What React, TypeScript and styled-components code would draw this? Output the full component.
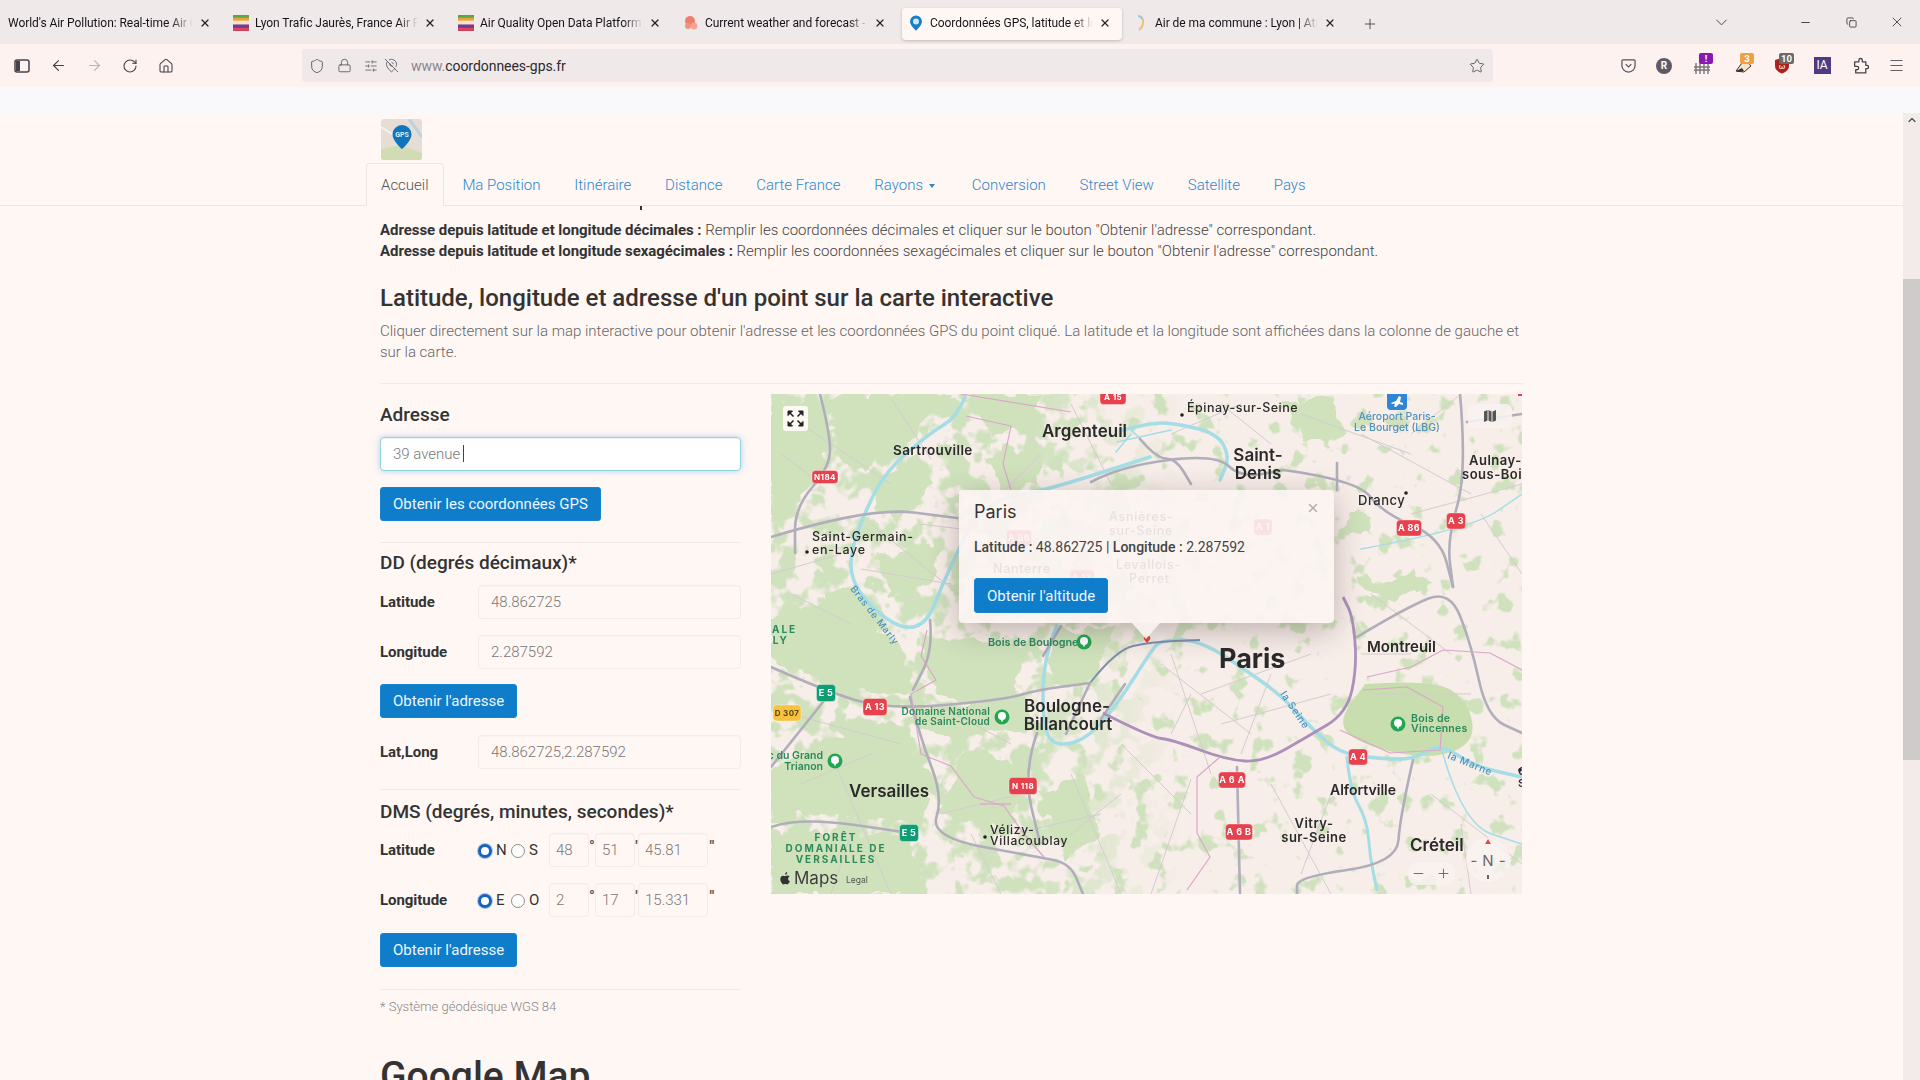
import React from "react";
import styled, { createGlobalStyle } from "styled-components";
import {
  ArrowLeft, ArrowRight, RotateCw, House, Shield, Lock, Star, Menu, Plus, ChevronDown,
  Minus, X, Copy, ChevronUp, MapPinOff, SlidersHorizontal,
} from "lucide-react";

const GlobalStyle = createGlobalStyle`
  html, body { margin: 0; padding: 0; width: 1920px; height: 1080px; overflow: hidden; background: #fff7f4; }
  * { box-sizing: border-box; }
  body { font-family: Roboto, "Liberation Sans", sans-serif; color: #333; }
`;

const Screen = styled.div`display: flex; flex-direction: column; width: 1920px; height: 1080px; overflow: hidden;`;

/* ---------- browser chrome ---------- */
const TabBar = styled.div`
  height: 44px; flex: none; display: flex; align-items: flex-start; padding: 8px 0 0 2px; gap: 5px;
  background: #f0e9ea; position: relative;
`;
const Tab = styled.div<{ $active?: boolean }>`
  width: 220px; height: 32px; flex: none; display: flex; align-items: center; gap: 6px; padding: 0 11px 2px 6px;
  border-radius: 4px; font: 400 12px Roboto, sans-serif; color: #15141a;
  background: ${(p) => (p.$active ? "#fff7f4" : "transparent")};
  box-shadow: ${(p) => (p.$active ? "0 1px 3px rgba(0,0,0,.2)" : "none")};
`;
const TabTitle = styled.span`
  flex: 1; min-width: 0; white-space: nowrap; overflow: hidden; letter-spacing: -.05px;
  -webkit-mask-image: linear-gradient(to right, #000 88%, transparent 100%);
  mask-image: linear-gradient(to right, #000 88%, transparent 100%);
`;
const TabIcon = styled.svg`width: 16px; height: 16px; flex: none;`;
const NewTab = styled.div`display: flex; align-items: center; height: 32px; margin-left: 10px; color: #4a4850;`;
const TabTools = styled.div`margin-left: auto; display: flex; align-items: center; height: 28px; color: #2d2b32;`;
const ChevronSlot = styled.div`margin-right: 51px; display: flex; color: #45434a;`;
const WinButton = styled.div`width: 46px; display: flex; justify-content: center;`;

const Toolbar = styled.div`
  height: 43px; flex: none; background: #fdf2f0; display: flex; align-items: center; padding-left: 14px; color: #45434a;
`;
const NavIcon = styled.div<{ $dim?: boolean }>`
  width: 36px; display: flex; justify-content: flex-start;
  color: ${(p) => (p.$dim ? "#b7b4b8" : "#45434a")};
`;
const UrlBar = styled.div`
  width: 1191px; height: 33px; margin-left: 108px; margin-right: 115px; flex: none; position: relative; border-radius: 4px; background: #f0e9ea;
  display: flex; align-items: center; padding-left: 7px; gap: 7px; color: #5a585e; font-size: 14px;
`;
const UrlIcons = styled.div`display: flex; align-items: center; gap: 6px;`;
const UrlText = styled.span`color: #8a878c; margin-left: 5px; letter-spacing: -.05px; b { font-weight: 400; color: #2b2a30; }`;
const StarSlot = styled.div`margin-left: auto; margin-right: 8px; display: flex;`;
const ExtRow = styled.div`display: flex; align-items: center; position: relative;`;
const ExtSlot = styled.div<{ $w: number }>`width: ${(p) => p.$w}px; height: 26px; display: flex; align-items: center; justify-content: center; position: relative;`;
const Badge = styled.span<{ $bg: string }>`
  position: absolute; top: 0; left: calc(50% - 3px); min-width: 14px; height: 11px; padding: 0 2px; border-radius: 2px; background: ${(p) => p.$bg};
  color: #fff; font: 700 9.5px/11px Roboto, sans-serif; text-align: center;
`;
const RoundExt = styled.span`
  width: 16px; height: 16px; border-radius: 50%; background: #5d5a66; color: #fff; font: 700 10px/16px Roboto, sans-serif; text-align: center;
`;
const IaExt = styled.span`
  width: 17px; height: 17px; background: #4f3a83; color: #fff; font: 400 12px/17px Roboto, sans-serif; text-align: center;
`;

const Strip = styled.div`height: 26px; flex: none; background: #f9f9fb;`;

/* ---------- page ---------- */
const Viewport = styled.div`flex: 1; min-height: 0; display: flex; background: #fff7f4;`;
const Page = styled.div`flex: 1; min-width: 0; display: flex; flex-direction: column; overflow: hidden;`;
const Scrollbar = styled.div`width: 17px; flex: none; background: #f3ebe9; display: flex; flex-direction: column; align-items: center; color: #4a4a4a;`;
const ScrollArrow = styled.div`height: 14px; display: flex; align-items: center;`;
const ScrollThumb = styled.div`width: 17px; height: 481px; margin-top: 152px; background: #cfcbcb;`;

const Header = styled.header`height: 93px; flex: none; border-bottom: 1px solid #eee5e2; padding: 6px 0 0 366px; position: relative;`;
const Logo = styled.svg`display: block; width: 41px; height: 41px; margin-left: 15px; border-radius: 3px;`;
const Nav = styled.nav`display: flex; margin-top: 3px; height: 43px; font-size: 15px; font-weight: 300;`;
const NavItem = styled.a<{ $active?: boolean }>`
  padding: 0 15px; margin-right: 3.8px; height: 43px; line-height: 44px; color: ${(p) => (p.$active ? "#555" : "#2f86cc")}; white-space: nowrap;
  ${(p) => p.$active && "border: 1px solid #eee5e2; border-bottom-color: #fff7f4; border-radius: 4px 4px 0 0; padding: 0 14px; line-height: 42px; background: #fff7f4;"}
`;
const Caret = styled.span`
  display: inline-block; margin: 0 3px 0 6px; vertical-align: 2px; border-left: 3.5px solid transparent; border-right: 3.5px solid transparent; border-top: 4px solid #2f86cc;
`;

const Content = styled.main`padding: 0 0 0 380px; width: 1523px; overflow: hidden; flex: 1;`;
const ClippedGlyph = styled.div`width: 2px; height: 4px; margin-left: 260px; background: #333;`;
const Intro = styled.p`margin: 10px 0 0; font-size: 15px; line-height: 21px; font-weight: 300; color: #444; b { font-weight: 700; color: #333; letter-spacing: -.05px; }`;
const H2 = styled.h2`margin: 23px 0 0; font-size: 24px; line-height: 26px; font-weight: 500; color: #333;`;
const Lead = styled.p`margin: 10px 0 0; font-size: 15px; line-height: 21px; font-weight: 300; color: #666; width: 1143px;`;
const Rule = styled.hr<{ $top?: number; $bottom?: number }>`
  border: 0; border-top: 1px solid #f0e9e6; margin: ${(p) => p.$top ?? 20}px 0 ${(p) => p.$bottom ?? 10}px;
`;
const Columns = styled.div`display: grid; grid-template-columns: 361px 751px; column-gap: 30px; margin-top: 10px;`;
const Form = styled.div`display: flex; flex-direction: column; padding-top: 11px;`;
const H4 = styled.h4`margin: 0; font-size: 19px; line-height: 20px; font-weight: 500; color: #333;`;
const Input = styled.div<{ $focus?: boolean; $w?: number }>`
  height: 34px; border-radius: 4px; padding: 0 12px; font: 300 15px/32px Roboto, sans-serif; color: #777;
  width: ${(p) => (p.$w ? p.$w + "px" : "100%")}; flex: ${(p) => (p.$w ? "none" : "1")};
  border: 1px solid ${(p) => (p.$focus ? "#8fd4dc" : "#f2ebe8")};
  background: ${(p) => (p.$focus ? "#fff" : "transparent")};
  box-shadow: ${(p) => (p.$focus ? "0 0 6px rgba(102,175,233,.5), inset 0 1px 1px rgba(0,0,0,.05)" : "inset 0 1px 1px rgba(0,0,0,.02)")};
`;
const SmallInput = styled(Input)`padding: 0 6px;`;
const Cursor = styled.span`display: inline-block; width: 1px; height: 17px; background: #444; margin-left: 3px; vertical-align: -3px;`;
const Btn = styled.button`
  display: block; align-self: flex-start; height: 34px; padding: 0 12px; border: 1px solid #1584d2; border-radius: 3px; background: #0f7dc9;
  color: #eef7ff; font: 400 15px Roboto, sans-serif;
`;
const Row = styled.div<{ $mt?: number }>`display: flex; align-items: center; margin-top: ${(p) => p.$mt ?? 16}px;`;
const Label = styled.label`width: 98px; flex: none; font-size: 15px; font-weight: 700; color: #333; letter-spacing: -.05px;`;
const RadioGroup = styled.div`width: 71px; flex: none; display: flex; align-items: center; font-size: 15px; color: #333;`;
const Radio = styled.span<{ $on?: boolean }>`
  width: 14px; height: 14px; flex: none; border-radius: 50%; margin: 2px 4px 0 0; background: #fff;
  border: ${(p) => (p.$on ? "3px solid #1a63bd" : "1px solid #8f8f8f")};
  box-shadow: ${(p) => (p.$on ? "inset 0 0 0 1px #fff, 0 0 0 1px #a9c7e6" : "none")};
`;
const RadioText = styled.span`width: 15px; flex: none;`;
const Sign = styled.span<{ $w: number }>`width: ${(p) => p.$w}px; flex: none; font-size: 15px; font-weight: 700; color: #555; text-align: center; margin-top: -8px;`;
const Note = styled.p`margin: 0; font-size: 13px; line-height: 17px; font-weight: 300; color: #888;`;
const H1 = styled.h1`margin: 40px 0 0; font-size: 39px; line-height: 43px; font-weight: 500; color: #333;`;

/* ---------- map ---------- */
const MapFrame = styled.div`position: relative; width: 751px; height: 500px; overflow: hidden; background: #f7ede9;`;
const MapArt = styled.svg`display: block; width: 751px; height: 500px; filter: blur(.5px); font-family: Inter, Roboto, sans-serif;`;
const FullBtn = styled.div`
  position: absolute; left: 12px; top: 12px; width: 25px; height: 25px; border-radius: 3px; background: rgba(255,250,248,.95);
  display: flex; align-items: center; justify-content: center;
`;
const LayerBtn = styled.div`
  position: absolute; left: 697px; top: 10px; width: 44px; height: 24px; border-radius: 6px; background: rgba(250,243,240,.88);
  display: flex; align-items: center; justify-content: center;
`;
const Zoomer = styled.div`
  position: absolute; left: 637px; top: 468px; width: 47px; height: 23px; border-radius: 9px; background: rgba(250,243,240,.82);
  display: flex; align-items: center; justify-content: space-between; padding: 0 4px 0 3px; color: #6a6668;
`;
const Compass = styled.div`
  position: absolute; left: 695px; top: 444px; width: 44px; height: 44px; border-radius: 50%; background: rgba(250,243,240,.75);
  display: flex; align-items: center; justify-content: center; font: 400 15px Inter, sans-serif; color: #6a6668; gap: 5px;
`;
const CompassNeedle = styled.span`
  position: absolute; left: 19px; top: 1px; border-left: 3px solid transparent; border-right: 3px solid transparent; border-bottom: 5px solid #e8434a;
`;
const CompassTail = styled.span`position: absolute; left: 21px; bottom: 3px; width: 2px; height: 4px; background: #666;`;
const Popup = styled.div`
  position: absolute; left: 188px; top: 96px; width: 375px; height: 133px; padding: 11px 15px; border-radius: 4px;
  background: rgba(251,244,242,.9); box-shadow: 0 8px 30px rgba(60,40,40,.3);
`;
const PopupTail = styled.div`
  position: absolute; left: 173px; bottom: -16px; width: 0; height: 0;
  border-left: 14px solid transparent; border-right: 14px solid transparent; border-top: 16px solid rgba(251,244,242,.9);
`;
const PopupClose = styled.div`position: absolute; right: 14px; top: 11px; color: #b5aeae; display: flex;`;
const PopupTitle = styled.h3`margin: 0; font-size: 18px; line-height: 22px; font-weight: 400; color: #333; font-family: Inter, Roboto, sans-serif;`;
const PopupText = styled.p`margin: 14px 0 0; font-size: 14px; line-height: 20px; color: #444; b { font-weight: 500; }`;
const PopupBtn = styled(Btn)`margin-top: 21px; height: 35px; padding: 0 12px;`;

const tabs = [
  { t: "World's Air Pollution: Real-time Air Quality", i: "" },
  { t: "Lyon Trafic Jaurès, France Air Pollution", i: "aqi" },
  { t: "Air Quality Open Data Platform: Worldwide", i: "aqi" },
  { t: "Current weather and forecast - OpenWeather", i: "owm" },
  { t: "Coordonnées GPS, latitude et longitude", i: "gps", active: true },
  { t: "Air de ma commune : Lyon | Atmo", i: "moon" },
];

function TabGlyph({ kind }: { kind: string }) {
  if (kind === "aqi")
    return (
      <TabIcon viewBox="0 0 16 22" preserveAspectRatio="none">
        <rect width="16" height="4" fill="#5ea44a" />
        <rect y="4" width="16" height="4" fill="#e8a33a" />
        <rect y="8" width="16" height="5" fill="#f6e3c9" />
        <rect y="13" width="16" height="5" fill="#7a3a8c" />
        <rect y="18" width="16" height="4" fill="#d6405a" />
      </TabIcon>
    );
  if (kind === "owm")
    return (
      <TabIcon viewBox="0 0 16 16">
        <circle cx="7" cy="6" r="5" fill="#ef7f6a" />
        <circle cx="11" cy="11" r="3.4" fill="#f4a394" />
        <circle cx="5" cy="11" r="3" fill="#f09382" />
      </TabIcon>
    );
  if (kind === "gps")
    return (
      <TabIcon viewBox="0 0 16 16">
        <path d="M8 0.5a6 6 0 0 1 6 6c0 4-6 9.2-6 9.2S2 10.5 2 6.5a6 6 0 0 1 6-6z" fill="#1a7fc4" />
        <circle cx="8" cy="6.5" r="3" fill="#cfe7f6" />
      </TabIcon>
    );
  if (kind === "moon")
    return (
      <TabIcon viewBox="0 0 16 16">
        <path d="M6 1c5 1 6 9 0 14" fill="none" stroke="#e9c27a" strokeWidth="2" />
        <path d="M5 1c2 0 3 1 4 3" fill="none" stroke="#8fc7e8" strokeWidth="1.5" />
      </TabIcon>
    );
  return null;
}

function Shield2({ x, y, t, w = 26, h = 16, c = "#e8414e", fs = 9 }: { x: number; y: number; t: string; w?: number; h?: number; c?: string; fs?: number }) {
  return (
    <g>
      <rect x={x - w / 2} y={y - h / 2} width={w} height={h} rx="3.5" fill={c} stroke="#fff" strokeOpacity=".5" strokeWidth=".7" />
      <text x={x} y={y + fs * 0.36} textAnchor="middle" fontSize={fs} fontWeight="700" fill={c === "#f7c33f" ? "#5b4512" : "#fff"} letterSpacing=".4">{t}</text>
    </g>
  );
}

function Park({ x, y }: { x: number; y: number }) {
  return (
    <g>
      <circle cx={x} cy={y} r="7.5" fill="#22a750" />
      <circle cx={x} cy={y - 1} r="4" fill="#fff" />
      <rect x={x - 0.8} y={y} width="1.6" height="4.5" fill="#fff" />
    </g>
  );
}

/* turns a list of points into a rounded line, as map roads are */
function smooth(pts: string): string {
  const n = pts.match(/-?\d+(\.\d+)?/g)!.map(Number);
  const p: [number, number][] = [];
  for (let i = 0; i + 1 < n.length; i += 2) p.push([n[i], n[i + 1]]);
  let d = `M${p[0][0]} ${p[0][1]}`;
  for (let i = 1; i < p.length - 1; i++) {
    const mx = (p[i][0] + p[i + 1][0]) / 2;
    const my = (p[i][1] + p[i + 1][1]) / 2;
    d += `Q${p[i][0]} ${p[i][1]} ${mx} ${my}`;
  }
  const l = p[p.length - 1];
  return d + `L${l[0]} ${l[1]}`;
}

const greens = [
  "M0 5L47 0 60 40 56 72 22 110 0 125Z", "M60 0H180L130 50 95 75 64 62Z", "M205 0H270L262 30 220 45Z",
  "M0 225L78 190 128 250 142 300 62 296 0 268Z", "M0 372L58 340 135 330 162 400 150 432 60 420 0 430Z", "M0 436L140 442 158 500H0Z",
  "M148 250L205 238 252 262 246 308 172 304Z", "M130 322L250 300 272 336 180 346Z", "M192 352L262 372 240 440 172 420Z",
  "M284 236L345 232 322 290 276 286Z", "M268 400L310 385 330 440 290 470Z", "M100 100L150 60 165 90 125 130Z",
  "M110 160L170 145 160 190 120 205Z", "M215 60L260 52 272 90 235 100Z",
  "M510 12L560 5 575 35 540 50Z", "M578 120L600 122 596 146 572 140Z", "M590 190L640 175 660 190 620 210Z",
];
const roads = [
  "M49 0L59 39 59 73 24 113 24 159", "M0 143L99 113 186 124", "M0 273L52 296 116 316 232 306 266 296 319 289",
  "M0 373L56 303", "M139 303L149 343 172 403 159 443 266 463 299 469 312 500", "M0 433L29 423 139 439",
  "M159 226L162 256 142 296", "M266 339L252 379 269 449", "M586 243L636 213 679 196 700 250 716 323 751 339",
  "M689 0L696 79 676 146 682 193", "M512 76L586 86 612 119 669 143 682 193", "M566 69L566 96", "M466 373L469 500",
  "M642 366L629 423 626 469 526 483 526 500", "M751 20L696 28", "M320 88L350 72 445 60 470 84 512 76",
  "M369 45L385 64 405 65 420 90", "M272 262L290 232", "M354 290L330 325", "M319 289L295 340",
];
const peri = "M332 319L379 343 402 346 456 366 492 368 536 343 576 319 586 273 582 223 572 203";
const borders = [
  "M195 22L240 32 232 70 240 96", "M156 236L150 262 165 286 140 300 150 360 180 372 203 403 233 412 253 440 273 463",
  "M596 283L640 273 672 256 719 259 751 276", "M592 296L636 293 672 313 669 356 619 359 569 336",
  "M449 363L426 383 426 439 439 463 416 496", "M209 410L240 410", "M190 0L300 18",
];
const streets = [
  "M30 30L120 90", "M100 130L200 210", "M0 180L70 160", "M90 175L180 190", "M165 310L240 350", "M20 320L130 350",
  "M60 360L120 500", "M170 420L250 400", "M300 380L350 500", "M350 350L420 420", "M420 385L380 500", "M500 390L560 500",
  "M560 400L530 480", "M660 400L751 470", "M640 120L751 90", "M590 40L700 100", "M430 300L540 260", "M390 270L480 340",
  "M450 330L560 300", "M400 40L470 10", "M530 20L640 60", "M710 120L751 180", "M600 300L700 300", "M690 430L700 500",
  "M300 10L340 90", "M120 5L160 65", "M10 60L50 90", "M230 100L270 60", "M200 440L230 500", "M80 440L60 500",
  "M400 260L440 380", "M500 280L470 360", "M420 300L400 340", "M350 400L300 440", "M240 440L330 420", "M590 260L640 260",
  "M600 200L680 260", "M640 40L690 0", "M450 10L500 50", "M20 200L80 230", "M30 390L100 360", "M150 130L230 140",
];
const dots: [number, number][] = [[36, 158], [411, 21], [635, 99], [214, 443], [749, 376]];

function MapDrawing() {
  return (
    <MapArt viewBox="0 0 751 500">
      <defs>
        <filter id="mottleDense" x="0" y="0" width="100%" height="100%" colorInterpolationFilters="sRGB">
          <feTurbulence type="fractalNoise" baseFrequency="0.04" numOctaves="3" seed="7" />
          <feColorMatrix type="matrix" values="0 0 0 0 .81  0 0 0 0 .886  0 0 0 0 .74  10 0 0 0 -4.9" />
        </filter>
        <filter id="mottleThin" x="0" y="0" width="100%" height="100%" colorInterpolationFilters="sRGB">
          <feTurbulence type="fractalNoise" baseFrequency="0.05" numOctaves="3" seed="13" />
          <feColorMatrix type="matrix" values="0 0 0 0 .81  0 0 0 0 .886  0 0 0 0 .74  10 0 0 0 -6" />
        </filter>
        <filter id="rough" x="-10%" y="-10%" width="120%" height="120%" colorInterpolationFilters="sRGB">
          <feTurbulence type="fractalNoise" baseFrequency="0.04" numOctaves="3" seed="3" result="n" />
          <feDisplacementMap in="SourceGraphic" in2="n" scale="26" xChannelSelector="R" yChannelSelector="G" />
        </filter>
        <linearGradient id="westFade" x1="0" x2="1" y1="0" y2="0">
          <stop offset=".55" stopColor="#fff" />
          <stop offset=".85" stopColor="#000" />
        </linearGradient>
        <mask id="westMask" maskUnits="userSpaceOnUse" x="0" y="0" width="480" height="500">
          <rect width="480" height="500" fill="url(#westFade)" />
        </mask>
      </defs>
      <rect width="751" height="500" fill="#f7ede9" />
      <rect width="751" height="500" filter="url(#mottleThin)" />
      <g mask="url(#westMask)">
        <rect width="480" height="500" filter="url(#mottleDense)" />
      </g>
      <g filter="url(#rough)">
        {greens.map((d, i) => <path key={i} d={d} fill="#cfe2bc" />)}
      </g>
      <path d={smooth("M594 290L661 285 697 306 705 348 661 366 593 352 565 330 594 290")} fill="#c8deae" />
      {streets.map((d, i) => <path key={i} d={d} fill="none" stroke="#d3cccf" strokeWidth="1" />)}
      <g fill="none" stroke="#a5dde6" strokeLinejoin="round" strokeLinecap="round">
        <path strokeWidth="3.5" d={smooth("M194 3L186 23 159 39 116 76 96 113 81 153 79 183 99 213 132 236 156 229 169 196 186 159 200 130 225 105 276 96 379 63")} />
        <path strokeWidth="3.5" d={smooth("M286 232L272 263 272 339 289 353 319 343 349 306 379 259 389 246 429 246 479 279 512 303 542 336 569 359 602 364 642 366 669 349 702 372 751 383")} />
        <path strokeWidth="3" d={smooth("M576 363L579 396 596 426 599 463 606 496")} />
        <path strokeWidth="3.5" d={smooth("M352 36L379 29 402 29 446 39 459 63 449 86")} />
        <path strokeWidth="1.5" d="M346 48L400 36M345 58L360 40M375 50L360 36" />
        <path strokeWidth="1.5" d={smooth("M590 155L700 135 751 100")} />
        <path strokeWidth="1.5" d={smooth("M669 349L690 430 751 450")} />
      </g>
      <path d={smooth("M319 289L345 256 379 248 429 246")} fill="none" stroke="#7f8fb0" strokeWidth="2" />
      {roads.map((d, i) => <path key={i} d={smooth(d)} fill="none" stroke="#b0aebb" strokeWidth="2.6" strokeLinejoin="round" strokeLinecap="round" />)}
      <path d={smooth(peri)} fill="none" stroke="#ac90ba" strokeWidth="2.8" strokeLinejoin="round" />
      {borders.map((d, i) => <path key={i} d={d} fill="none" stroke="#dca6c8" strokeWidth="1.2" strokeLinejoin="round" />)}
      {dots.map(([x, y], i) => <circle key={i} cx={x} cy={y} r="1.8" fill="#222" />)}

      <g fill="#2a2a2a" fontWeight="600">
        <text x="271" y="43" fontSize="17">Argenteuil</text>
        <text x="122" y="61" fontSize="13.5" letterSpacing=".4">Sartrouville</text>
        <text x="41" y="147" fontSize="12.5" fontWeight="500" letterSpacing=".7">Saint-Germain-</text>
        <text x="41" y="160" fontSize="12.5" fontWeight="500" letterSpacing=".7">en-Laye</text>
        <text x="296" y="318" fontSize="17" textAnchor="middle">Boulogne-</text>
        <text x="297" y="336" fontSize="17" textAnchor="middle">Billancourt</text>
        <text x="78" y="403" fontSize="17">Versailles</text>
        <text x="219" y="440" fontSize="12" fontWeight="500" letterSpacing=".7">Vélizy-</text>
        <text x="219" y="451" fontSize="12" fontWeight="500" letterSpacing=".7">Villacoublay</text>
        <text x="416" y="18" fontSize="12.5" fontWeight="500" letterSpacing=".5">Épinay-sur-Seine</text>
        <text x="487" y="67" fontSize="17" textAnchor="middle">Saint-</text>
        <text x="487" y="85" fontSize="17" textAnchor="middle">Denis</text>
        <text x="698" y="71" fontSize="13" letterSpacing=".5">Aulnay-</text>
        <text x="691" y="85" fontSize="13" letterSpacing=".5">sous-Bois</text>
        <text x="587" y="111" fontSize="13" fontWeight="500" letterSpacing=".5">Drancy</text>
        <text x="596" y="258" fontSize="15">Montreuil</text>
        <text x="448" y="274" fontSize="27" fontWeight="700">Paris</text>
        <text x="559" y="401" fontSize="14">Alfortville</text>
        <text x="543" y="434" fontSize="13" textAnchor="middle" letterSpacing=".5">Vitry-</text>
        <text x="543" y="448" fontSize="13" textAnchor="middle" letterSpacing=".5">sur-Seine</text>
        <text x="639" y="457" fontSize="17">Créteil</text>
        <text x="747" y="381" fontSize="11">C</text>
        <text x="747" y="393" fontSize="11">S</text>
        <text x="222" y="179" fontSize="12.5" letterSpacing=".7" fontWeight="500">Nanterre</text>
        <text x="338" y="127" fontSize="12.5" letterSpacing=".7" fontWeight="500">Asnières-</text>
        <text x="338" y="141" fontSize="12.5" letterSpacing=".7" fontWeight="500">sur-Seine</text>
        <text x="345" y="175" fontSize="12.5" letterSpacing=".7" fontWeight="500">Levallois-</text>
        <text x="358" y="189" fontSize="12.5" letterSpacing=".7" fontWeight="500">Perret</text>
      </g>
      <g fill="#2c8a5c" fontWeight="600">
        <text x="217" y="252" fontSize="10.8">Bois de Boulogne</text>
        <text x="219" y="321" textAnchor="end" fontSize="10" letterSpacing=".2">Domaine National</text>
        <text x="219" y="331" textAnchor="end" fontSize="10" letterSpacing=".2">de Saint-Cloud</text>
        <text x="52" y="365" textAnchor="end" fontSize="10.5">c du Grand</text>
        <text x="52" y="376" textAnchor="end" fontSize="10.5">Trianon</text>
        <text x="640" y="328" fontSize="10.5" letterSpacing=".3">Bois de</text>
        <text x="640" y="338" fontSize="10.5" letterSpacing=".3">Vincennes</text>
        <text x="65" y="447" textAnchor="middle" fontSize="10" fontWeight="700" letterSpacing="2">FORÊT</text>
        <text x="65" y="458" textAnchor="middle" fontSize="10" fontWeight="700" letterSpacing="2">DOMANIALE DE</text>
        <text x="65" y="469" textAnchor="middle" fontSize="10" fontWeight="700" letterSpacing="2">VERSAILLES</text>
        <text x="1" y="239" fontSize="10" fontWeight="700" letterSpacing="2">ALE</text>
        <text x="-6" y="250" fontSize="10" fontWeight="700" letterSpacing="2">LLY</text>
      </g>
      <g fill="#4f92bf" fontSize="10.5" fontWeight="500">
        <text x="626" y="26" textAnchor="middle">Aéroport Paris-</text>
        <text x="626" y="37" textAnchor="middle">Le Bourget (LBG)</text>
        <text x="0" y="0" transform="translate(79 195) rotate(52)" letterSpacing=".7" fontSize="9.5">Bras de Marly</text>
        <text x="0" y="0" transform="translate(509 300) rotate(56)" letterSpacing=".7" fontSize="10">la Seine</text>
        <text x="0" y="0" transform="translate(676 364) rotate(22)" letterSpacing=".7" fontSize="10">la Marne</text>
      </g>
      <Park x={313} y={248} />
      <Park x={231} y={323} />
      <Park x={64} y={367} />
      <Park x={627} y={330} />

      <Shield2 x={54} y={83} t="N184" h={13} fs={8} />
      <Shield2 x={342} y={3} t="A 15" h={15} fs={8} />
      <Shield2 x={55} y={299} t="E 5" w={19} h={17} c="#0f9d74" />
      <Shield2 x={104} y={313} t="A 13" w={24} h={17} />
      <Shield2 x={16} y={319} t="D 307" w={28} h={16} c="#f7c33f" fs={8} />
      <Shield2 x={252} y={392} t="N 118" w={28} h={17} fs={8} />
      <Shield2 x={138} y={439} t="E 5" w={19} h={17} c="#0f9d74" />
      <Shield2 x={638} y={134} t="A 86" w={25} />
      <Shield2 x={685} y={127} t="A 3" w={19} />
      <Shield2 x={587} y={363} t="A 4" w={19} />
      <Shield2 x={461} y={386} t="A 6 A" w={27} />
      <Shield2 x={468} y={438} t="A 6 B" w={27} />
      <Shield2 x={248} y={144} t="A 86" w={25} />
      <Shield2 x={311} y={184} t="A 13" w={24} />
      <Shield2 x={492} y={133} t="A 1" w={18} />
      <rect x="747" y="0" width="4" height="2" fill="#e8414e" />

      <rect x="616" y="-4" width="20" height="20" rx="4" fill="#2f86d6" />
      <path d="M620 9l5-2 3-5 2 1-1 5 3 1v2l-4-1-3 3-2-.5 1-3-3 .5z" fill="#fff" />
      <path d="M376 249c-3-3-4-5-3-6.5 1-1 2-.5 3 .5 1-1 2-1.5 3-.5 1 1.5 0 3.5-3 6.5z" fill="#e4472f" />

      <path d="M16 480c-1.3 0-2.2.8-3.3.8-1 0-1.9-.7-3-.7-2 0-3.7 1.8-3.7 4.6 0 3.4 2.6 7.5 4.5 7.5.9 0 1.3-.6 2.5-.6s1.5.6 2.5.6c1.6 0 3.2-2.8 3.7-4.3-1.6-.7-2.4-2-2.4-3.5 0-1.4.7-2.5 2-3.300-.7-.9-1.7-1.100-2.800-1.100zM15.500 475c-1.500.2-3 1.600-2.800 3.700 1.600.1 3-1.600 2.800-3.700z" fill="#333" transform="translate(5 136) scale(.72)" />
      <text x="23" y="490" fontSize="17" fontWeight="400" fill="#3d3d3d">Maps</text>
      <text x="75" y="489" fontSize="8.5" fontWeight="400" fill="#555">Legal</text>
    </MapArt>
  );
}

const tip = { strokeWidth: 1.6 };

export default function App() {
  return (
    <Screen>
      <GlobalStyle />
      <TabBar>
        {tabs.map((t) => (
          <Tab key={t.t} $active={t.active}>
            <TabGlyph kind={t.i} />
            <TabTitle>{t.t}</TabTitle>
            <X size={12} strokeWidth={2.4} color="#222" />
          </Tab>
        ))}
        <NewTab><Plus size={16} strokeWidth={1.4} /></NewTab>
        <TabTools>
          <ChevronSlot><ChevronDown size={19} strokeWidth={1.2} /></ChevronSlot>
          <WinButton><Minus size={13} strokeWidth={1.6} /></WinButton>
          <WinButton><Copy size={11} strokeWidth={1.7} /></WinButton>
          <WinButton><X size={16} strokeWidth={1.2} /></WinButton>
        </TabTools>
      </TabBar>
      <Toolbar>
        <NavIcon>
          <svg width="16" height="16" viewBox="0 0 16 16" fill="none" stroke="currentColor">
            <rect x="1" y="2" width="14" height="12" rx="2" strokeWidth="1.5" />
            <rect x="2" y="3" width="4" height="10" fill="currentColor" stroke="none" />
          </svg>
        </NavIcon>
        <NavIcon><ArrowLeft size={17} {...tip} /></NavIcon>
        <NavIcon $dim><ArrowRight size={17} {...tip} /></NavIcon>
        <NavIcon><RotateCw size={16} {...tip} /></NavIcon>
        <NavIcon><House size={16} {...tip} /></NavIcon>
        <UrlBar>
          <UrlIcons>
            <Shield size={16} strokeWidth={1.4} />
            <Lock size={15} strokeWidth={1.4} style={{ marginLeft: 6 }} />
            <SlidersHorizontal size={14} strokeWidth={1.4} style={{ marginLeft: 6 }} />
            <MapPinOff size={15} strokeWidth={1.4} />
          </UrlIcons>
          <UrlText>www.<b>coordonnees-gps.fr</b></UrlText>
          <StarSlot><Star size={16} strokeWidth={1.4} /></StarSlot>
        </UrlBar>
        <ExtRow>
          <ExtSlot $w={40}>
            <svg width="15" height="15" viewBox="0 0 16 16" fill="none" stroke="#55525c" strokeWidth="1.3">
              <path d="M2 2h12a1 1 0 0 1 1 1v5a7 7 0 0 1-14 0V3a1 1 0 0 1 1-1z" />
              <path d="M5 6.5l3 3 3-3" />
            </svg>
          </ExtSlot>
          <ExtSlot $w={32}><RoundExt>R</RoundExt></ExtSlot>
          <ExtSlot $w={44}>
            <svg width="16" height="16" viewBox="0 0 16 16" stroke="#77747c" strokeWidth="1.4">
              <path d="M2 5v11M6 5v11M10 5v11M14 5v11M0 9h16M0 12h16" />
            </svg>
            <Badge $bg="#8a18b0">!</Badge>
          </ExtSlot>
          <ExtSlot $w={38}>
            <svg width="18" height="17" viewBox="0 0 18 17">
              <path d="M2 14l6-8 5-2 4 5-7 6z" fill="#f6e3c9" stroke="#3a3030" strokeWidth="1" />
              <path d="M2 14l6-3 2 3-6 1z" fill="#333" />
            </svg>
            <Badge $bg="#f0a040">3</Badge>
          </ExtSlot>
          <ExtSlot $w={40}>
            <svg width="16" height="17" viewBox="0 0 16 17">
              <path d="M8 1l7 2v6c0 4-4 6.5-7 7.5C5 15.5 1 13 1 9V3z" fill="#a82222" />
              <text x="8" y="12" fontSize="8" textAnchor="middle" fill="#fff">ω</text>
            </svg>
            <Badge $bg="#6a6a6a">10</Badge>
          </ExtSlot>
          <ExtSlot $w={40}><IaExt>IA</IaExt></ExtSlot>
          <ExtSlot $w={36}>
            <svg width="17" height="17" viewBox="0 0 16 16" fill="none" stroke="#45434a" strokeWidth="1.2" strokeLinejoin="round">
              <path d="M6.5 3a1.600 1.600 0 0 1 3.200 0v1.500h3.300v3.300h1a1.600 1.600 0 0 1 0 3.200h-1V15H3.500v-3h1.200a1.600 1.600 0 0 0 0-3.200H2.500V4.500h4z" />
            </svg>
          </ExtSlot>
          <ExtSlot $w={36}><Menu size={17} strokeWidth={1.2} color="#45434a" /></ExtSlot>
        </ExtRow>
      </Toolbar>
      <Strip />
      <Viewport>
        <Page>
          <Header>
            <Logo viewBox="0 0 41 41">
              <rect width="41" height="41" fill="#e6ded4" />
              <path d="M0 30L20 26 41 34V41H0Z" fill="#d2dcb4" />
              <path d="M28 0L41 18" stroke="#bcd2e2" strokeWidth="3" />
              <path d="M0 8L16 18" stroke="#f6f2ee" strokeWidth="2" />
              <path d="M21 6a9.5 9.5 0 0 1 9.5 9.5C30.5 22 21 30 21 30S11.5 22 11.5 15.5A9.5 9.5 0 0 1 21 6z" fill="#1175bd" />
              <text x="21" y="18" textAnchor="middle" fontSize="7" fontWeight="700" fill="#d9eefb">GPS</text>
            </Logo>
            <Nav>
              <NavItem $active>Accueil</NavItem>
              <NavItem>Ma Position</NavItem>
              <NavItem>Itinéraire</NavItem>
              <NavItem>Distance</NavItem>
              <NavItem>Carte France</NavItem>
              <NavItem>Rayons<Caret /></NavItem>
              <NavItem>Conversion</NavItem>
              <NavItem>Street View</NavItem>
              <NavItem>Satellite</NavItem>
              <NavItem>Pays</NavItem>
            </Nav>
          </Header>
          <Content>
            <ClippedGlyph />
            <Intro>
              <b>Adresse depuis latitude et longitude décimales :</b> Remplir les coordonnées décimales et cliquer sur le bouton "Obtenir l'adresse" correspondant.<br />
              <b>Adresse depuis latitude et longitude sexagécimales :</b> Remplir les coordonnées sexagécimales et cliquer sur le bouton "Obtenir l'adresse" correspondant.
            </Intro>
            <H2>Latitude, longitude et adresse d'un point sur la carte interactive</H2>
            <Lead>Cliquer directement sur la map interactive pour obtenir l'adresse et les coordonnées GPS du point cliqué. La latitude et la longitude sont affichées dans la colonne de gauche et sur la carte.</Lead>
            <Rule $top={20} $bottom={0} />
            <Columns>
              <Form>
                <H4>Adresse</H4>
                <Row $mt={12}><Input $focus>39 avenue<Cursor /></Input></Row>
                <Row $mt={16}><Btn>Obtenir les coordonnées GPS</Btn></Row>
                <Rule $top={21} $bottom={10} />
                <H4>DD (degrés décimaux)*</H4>
                <Row $mt={12}><Label>Latitude</Label><Input>48.862725</Input></Row>
                <Row><Label>Longitude</Label><Input>2.287592</Input></Row>
                <Row $mt={15}><Btn>Obtenir l'adresse</Btn></Row>
                <Row $mt={17}><Label>Lat,Long</Label><Input>48.862725,2.287592</Input></Row>
                <Rule $top={20} $bottom={12} />
                <H4>DMS (degrés, minutes, secondes)*</H4>
                <Row $mt={11}>
                  <Label>Latitude</Label>
                  <RadioGroup><Radio $on /><RadioText>N</RadioText><Radio />S</RadioGroup>
                  <SmallInput $w={40}>48</SmallInput><Sign $w={6}>°</Sign>
                  <SmallInput $w={40}>51</SmallInput><Sign $w={3}>'</Sign>
                  <SmallInput $w={70}>45.81</SmallInput><Sign $w={8}>"</Sign>
                </Row>
                <Row>
                  <Label>Longitude</Label>
                  <RadioGroup><Radio $on /><RadioText>E</RadioText><Radio />O</RadioGroup>
                  <SmallInput $w={40}>2</SmallInput><Sign $w={6}>°</Sign>
                  <SmallInput $w={40}>17</SmallInput><Sign $w={3}>'</Sign>
                  <SmallInput $w={70}>15.331</SmallInput><Sign $w={8}>"</Sign>
                </Row>
                <Row $mt={16}><Btn>Obtenir l'adresse</Btn></Row>
                <Rule $top={22} $bottom={8} />
                <Note>* Système géodésique WGS 84</Note>
              </Form>
              <MapFrame>
                <MapDrawing />
                <FullBtn>
                  <svg width="17" height="17" viewBox="0 0 17 17" fill="#222" stroke="#222" strokeWidth="1">
                    <path d="M1 1h4.5L1 5.5zM16 1v4.5L11.5 1zM1 16v-4.5L5.500 16zM16 16h-4.500l4.500-4.500z" />
                    <path d="M2 2l4.5 4.5M15 2l-4.500 4.500M2 15l4.500-4.500M15 15l-4.500-4.500" strokeWidth="1.5" />
                  </svg>
                </FullBtn>
                <LayerBtn>
                  <svg width="14" height="14" viewBox="0 0 14 14" fill="#555">
                    <path d="M1 2.5l3.5-1.500v10.500L1 13zM5.500 1l3 1.500V13l-3-1.500zM9.500 2.500L13 1v10.500L9.500 13z" />
                  </svg>
                </LayerBtn>
                <Zoomer><Minus size={15} strokeWidth={1.5} /><Plus size={15} strokeWidth={1.5} /></Zoomer>
                <Compass><CompassNeedle /><span>-</span><span>N</span><span>-</span><CompassTail /></Compass>
                <Popup>
                  <PopupTitle>Paris</PopupTitle>
                  <PopupText><b>Latitude :</b> 48.862725 | <b>Longitude :</b> 2.287592</PopupText>
                  <PopupBtn>Obtenir l'altitude</PopupBtn>
                  <PopupClose><X size={14} strokeWidth={2.6} /></PopupClose>
                  <PopupTail />
                </Popup>
              </MapFrame>
            </Columns>
            <H1>Google Map</H1>
          </Content>
        </Page>
        <Scrollbar>
          <ScrollArrow><ChevronUp size={12} strokeWidth={2.4} /></ScrollArrow>
          <ScrollThumb />
        </Scrollbar>
      </Viewport>
    </Screen>
  );
}
